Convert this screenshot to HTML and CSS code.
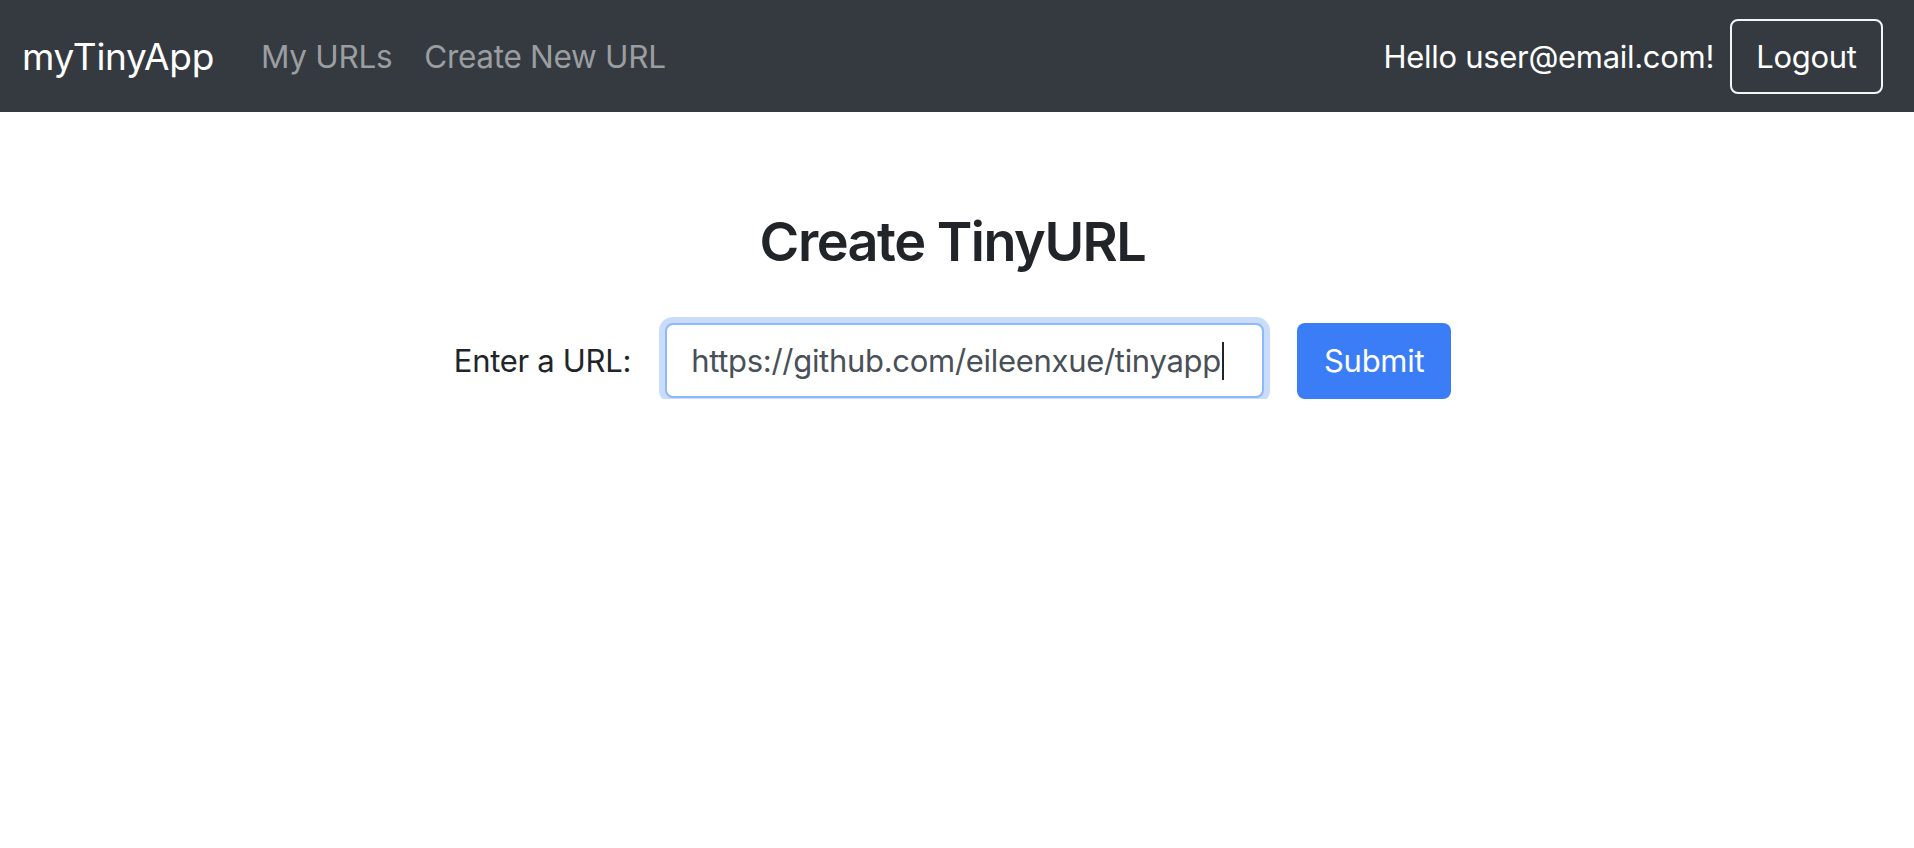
FILE: index.html
```html
<!DOCTYPE html>
<html lang="en">
<head>
<meta charset="utf-8">
<title>myTinyApp</title>
<link rel="stylesheet" href="styles.css">
</head>
<body>
<nav class="navbar">
  <a class="brand" href="#">myTinyApp</a>
  <ul class="nav-links">
    <li><a href="#">My URLs</a></li>
    <li><a href="#">Create New URL</a></li>
  </ul>
  <div class="nav-user">
    <span class="hello">Hello user@email.com!</span>
    <button class="btn-logout" type="button">Logout</button>
  </div>
</nav>
<main class="content">
  <h1 class="title">Create TinyURL</h1>
  <form class="url-form">
    <label class="url-label">Enter a URL:</label>
    <div class="url-input"><span class="url-text">https://github.com/eileenxue/tinyapp</span><span class="caret"></span></div>
    <button class="btn-submit" type="button">Submit</button>
  </form>
</main>
</body>
</html>
```

FILE: styles.css
```css
* { box-sizing: border-box; }
html, body {
  margin: 0;
  padding: 0;
  background: #ffffff;
  font-family: Inter, "Liberation Sans", Arial, sans-serif;
  color: #212529;
}
.navbar {
  display: flex;
  align-items: center;
  height: 112px;
  padding: 0 31px 0 22px;
  background: #343a40;
}
.brand {
  color: #ffffff;
  text-decoration: none;
  font-size: 37px;
  letter-spacing: -0.3px;
  margin-right: 47px;
}
.nav-links {
  display: flex;
  gap: 32px;
  list-style: none;
  margin: 0;
  padding: 0;
}
.nav-links a {
  color: #9b9ea1;
  text-decoration: none;
  font-size: 31.5px;
  letter-spacing: -0.3px;
}
.nav-user {
  margin-left: auto;
  display: flex;
  align-items: center;
  gap: 16px;
}
.hello {
  color: #ffffff;
  font-size: 31px;
  letter-spacing: -0.3px;
}
.btn-logout {
  width: 153px;
  height: 75px;
  background: transparent;
  border: 2px solid #f4f5f6;
  border-radius: 8px;
  color: #ffffff;
  font-family: inherit;
  font-size: 31px;
  letter-spacing: -0.3px;
  padding: 0;
}
.content {
  display: flex;
  flex-direction: column;
  align-items: center;
  padding: 98px 9px 0 0;
}
.title {
  margin: 0;
  font-size: 54px;
  font-weight: 600;
  line-height: 1.2;
  letter-spacing: -1.5px;
  color: #212529;
}
.url-form {
  display: flex;
  align-items: center;
  margin-top: 48px;
}
.url-label {
  font-size: 31px;
  letter-spacing: -0.3px;
  margin-right: 34px;
  color: #212529;
}
.url-input {
  display: flex;
  align-items: center;
  width: 599px;
  height: 75px;
  padding: 0 24px;
  border: 2px solid #8db8f9;
  border-radius: 8px;
  box-shadow: 0 0 0 6px #cadcfc;
  background: #ffffff;
}
.url-text {
  font-size: 31px;
  letter-spacing: -0.3px;
  color: #495057;
  white-space: nowrap;
}
.caret {
  display: inline-block;
  width: 2px;
  height: 38px;
  background: #212529;
  margin-left: 1px;
}
.btn-submit {
  margin-left: 33px;
  width: 154px;
  height: 76px;
  background: #3b7df6;
  border: none;
  border-radius: 8px;
  color: #ffffff;
  font-family: inherit;
  font-size: 31px;
  letter-spacing: -0.3px;
  padding: 0;
}
```
